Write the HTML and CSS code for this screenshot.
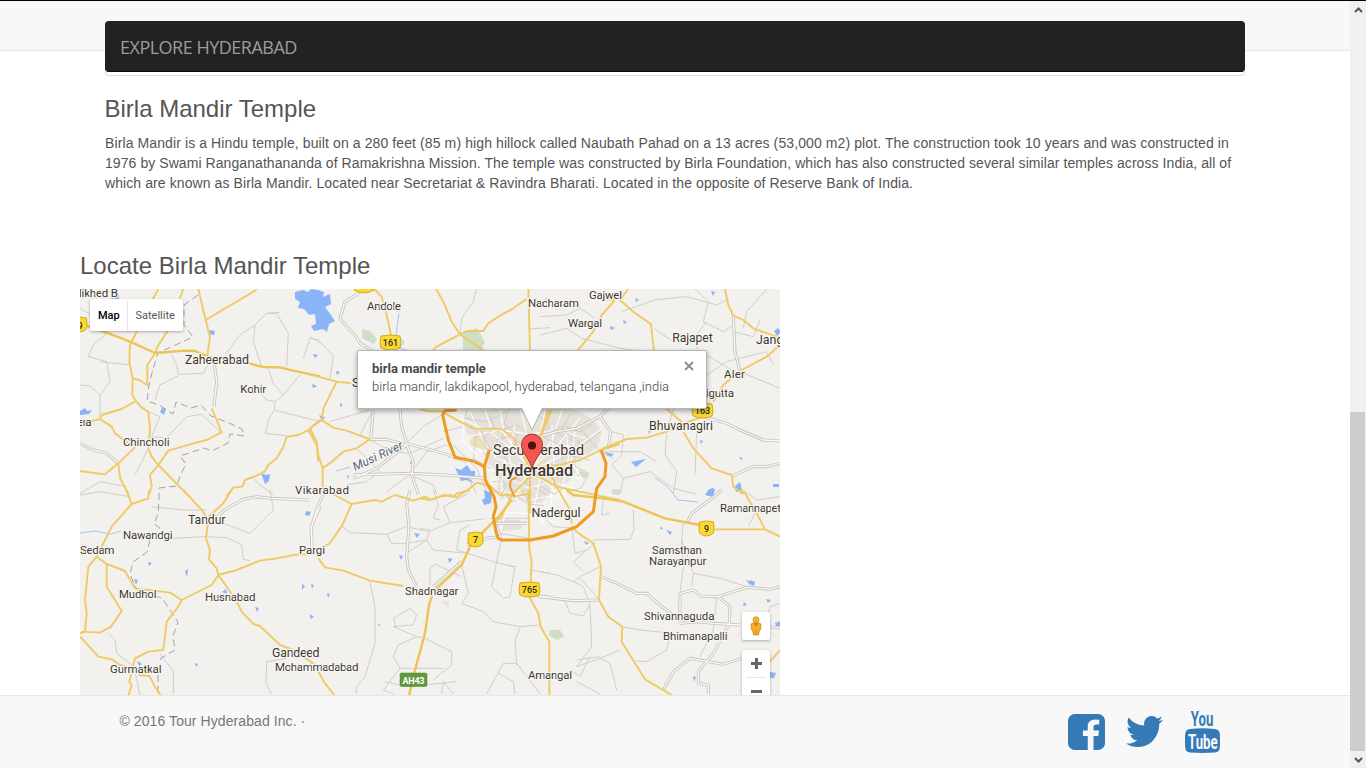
FILE: index.html
```
<!DOCTYPE html>
<html lang="en">
<head>
<meta charset="utf-8">
<title>Explore Hyderabad</title>
<link rel="stylesheet" href="styles.css">
</head>
<body>
<div class="window">
  <div class="page">
    <header class="topbar">
      <div class="panel"><nav class="navbar"><a class="brand">EXPLORE HYDERABAD</a></nav></div>
    </header>
    <main class="content">
      <section class="about">
        <h3>Birla Mandir Temple</h3>
        <p><span class="loose">Birla Mandir is a Hindu temple, built on a 280 feet (85 m) high hillock called Naubath Pahad on a 13 acres (53,000 m2) plot. The construction took 10 years and was constructed in</span> <span class="snug">1976 by Swami Ranganathananda of Ramakrishna Mission. The temple was constructed by Birla Foundation, which has also constructed several similar temples across India, all of</span> <span class="medium">which are known as Birla Mandir. Located near Secretariat &amp; Ravindra Bharati. Located in the opposite of Reserve Bank of India.</span></p>
      </section>
      <section class="locate">
        <h3>Locate Birla Mandir Temple</h3>
        <div class="map">
          <svg class="canvas" viewBox="80 289 700 406" width="700" height="406">
            <!-- parks and urban areas -->
            <path class="park" d="M463 333l14-5 8 14-4 8h-18zM362 329l8 2 7 8-3 5-12-6zM469 427l5-5 8 4 1 9-10-2zM580 470l8 4-3 5-8-3zM550 630h10l4 6-6 4-9-4zM612 489l9 1-2 5-7-1z"/>
            <path class="urban" d="M463 420l8-8 30-4 20-3 24 1 31 4 18 10 8 12-4 14-10 8-12 4 0 14-8 10-14 8-12 12-15 2-12-6-14 1-4-10 2-14-12-14-10-20-10-8zM500 519l20 1 2 9-20 2zM440 601l9 1v6z"/>
            <path class="sand" d="M470 440l8-6 9 7-4 8-12-3zM524 456l10-4 12 8-2 12-10 4-10-6z"/>
            <!-- lakes -->
            <path class="water" d="M295 292l8-2 5 2 3-3 7 1 6 2-1 5 7-3 1 10-6 3 6 8 4 6-6 3-2 8-4-3-9 2-3-5 5-2-1-10-6 1-5-6-6-1 2-6-5-3zM455 468l6 2 6-5 4 6 4 0 0 6-5 2 4 4-8-3-5 1-3-7zM484 490l8 3-1 10-7 2-2-5 3-2zM111 289h6l3 14-8-3zM210 330l5 1-1 4-6-1zM80 411l5-3 2 3 5-1-3 4-9 1zM261 473l5 2 4-1-1 7-4 3zM162 408l4 1-2 6-4-3zM712 488l3 1-2 8-8-2 3-5zM735 486l5-4 2 8-6 2zM774 331l4-3 3 4-4 4zM775 623l6-2v5h-5zM604 452l10 2-4 3zM631 462l15-3-10 8zM750 580l5 2-1 4-4-2zM773 484h6v3h-6zM770 672l6 1-2 5h-6zM346 475l3 1v3zM185 571l3-2-1 8zM306 511l5 1-2 4-4-1zM134 579l4 1-2 5zM222 592l4-3 1 5zM148 562l4 1-3 3zM255 607l4 1-2 4zM302 584l3 2-3 4zM311 584l3 1-2 4zM310 614l4 3-4 2zM414 533l6 1-3 4zM399 555l4 1-2 4zM448 558l5 1-4 4zM327 593l3 1-2 4zM666 530l6 2-2 3zM660 527l3 1-2 2zM584 541l5 2-3 2zM610 326l5 2-4 2zM623 320l4 2-3 2zM635 298l4 2-3 2zM711 291l4 1-2 4zM312 384l5 2-4 2zM336 371l4 1-3 3zM319 415l6 2-3 4zM340 403l3 2-3 2zM313 354l5 1-3 3zM700 440l3 1-2 3zM739 457l4 1-2 2zM744 602l3 3-4 1zM766 599l5 1-3 3zM746 580l6 2-2 3zM693 676l3 1-2 5zM648 430l3 1-2 3zM195 663l3 1-2 3zM137 661l5 3-3 2zM378 624l3 1-3 1zM410 461l2 2-2 1z"/>
            <path class="stream" d="M399 313l-3 22 8 7-5 6 13 4M336 471l14-4M80 533l15-2 16 3 10-3M655 478l12 8 11 14 20 2"/>

            <!-- minor roads -->
            <g class="minor">
              <g transform="translate(80 285) scale(.33333)"><path d="M435 210L480 150 525 120 560 85 590 85 625 145 620 245M565 250L580 295 610 330 585 350 583 375 720 410M530 315L560 345 585 350M583 375L565 405 557 445 620 452M80 145L40 180 25 215 80 230 90 290 60 330 60 395M60 230L150 240M0 300L30 303 60 330M275 210L290 240 295 268 370 265 385 235M295 272L240 300 225 345M205 380L240 395 215 455 260 458 320 395 365 388 420 440M0 70L50 100 70 130M610 330L660 270M670 220L690 160 720 165M520 580L540 600 580 628M560 85L600 82M205 490L180 540 165 570M0 625L60 590 140 605M525 120L520 170 545 245"/></g>
              <g transform="translate(310 285) scale(.33333)"><path d="M0 155L40 180 70 215 60 280M500 12L490 50 455 100 450 148M655 132L720 128M190 375L160 430 150 455M395 390L340 425 290 475M60 410L180 375M180 463L240 500 300 505 400 460M140 490L210 560 170 590 110 600M300 570L370 600 380 628M305 565L230 620M410 480L350 500 305 560M430 480L500 550 530 620M400 440L460 425 470 375M500 430L490 520 540 550M580 430L575 500 610 560M460 400L530 410 600 375M560 440L620 420 680 460M470 570L500 628M550 590L620 580 710 628"/></g>
              <g transform="translate(540 285) scale(.33333)"><path d="M0 95L80 90 120 70 165 100M0 150L80 130 125 160 240 190 300 198M245 80L345 45 440 35 530 60 560 45M342 130L400 170M465 12L505 50 490 110 550 140 580 120M500 110L460 160 475 195M580 140L640 155 660 105M610 130L620 80 680 12M500 270L560 230 680 200 700 240M600 260L720 310M500 210L600 270M120 430L180 500 220 520M215 440L250 450 245 510 215 540 250 580 240 628M40 440L130 480 180 440M330 440L390 410 400 372M380 445L375 510 410 560 400 628M470 440L465 570M180 500L300 500 350 530M250 580L330 560 400 610 470 628"/></g>
              <g transform="translate(80 490) scale(.33333)"><path d="M0 15L60 5 150 20M215 50L310 60 380 60M280 145L370 140 440 143 485 165 490 208 510 212M430 100L510 130 580 60 570 0M85 430L105 450 110 490 155 525M165 545L180 615M240 490L280 545 280 612M620 505L560 515 558 580 575 612"/></g>
              <g transform="translate(310 490) scale(.33333)"><path d="M97 110L120 128 230 133 290 110 355 125 420 98 540 85 660 85M230 133L245 160 290 160 350 150 370 180 470 190M290 190L350 150 360 120 330 115M370 0L385 45 370 85 390 90M475 10L400 50 420 98M550 75L575 140 545 290 580 325 600 320 615 230 590 225M440 180L550 215 610 230M440 180L450 120 480 105M455 225L475 310 455 340 520 365 550 395 630 410M360 310L360 235 375 222 455 260M180 275L195 350 195 460 165 560 140 590 138 612M250 385L300 355 320 375 310 405 250 410 320 440 345 445 425 485 425 525 370 570M320 440L265 465 250 500 270 535 220 600 250 612M270 535L400 535M250 385L258 412M225 575L290 590 440 575M395 612L400 575 430 612M630 410L690 405M630 415L615 450 620 525M530 612L580 520 620 520 690 612M565 550L610 575 615 612M570 130L660 145M660 240L720 250"/></g>
              <g transform="translate(540 490) scale(.33333)"><path d="M0 245L50 255 100 275 120 260 180 230M120 265L175 325M95 110L105 190 140 180 165 160M280 60L282 120 270 148 160 150M140 180L100 215 130 245M75 335L90 370 130 378 150 345 130 290 100 275M150 345L155 470 110 530M245 410L300 420 400 430M390 435L380 480 320 515 290 512M180 505L210 520 230 600M110 530L180 505 240 480M430 95L425 150 460 250 540 265 620 290M425 150L430 230 420 310M625 110L650 60M460 250L455 290M530 320L520 420 480 500M110 575L180 612M90 540L120 560 150 500M180 500L110 510M610 0L650 30 720 20M0 70L40 110 105 115M190 25L185 75 210 70M685 370L690 350 720 340"/></g>
            </g>
            <!-- city street mesh -->
            <path class="mesh" d="M462 418l18 10 20 2 15 10 14 20M470 412l14 30 12 16 20 8 14 4M485 410l8 24 20 16 18 18M500 408l4 26 26 34M520 409l6 22 6 38M545 409l-5 30-8 30M562 410l-10 30-20 28M580 418l-20 24-28 26M600 430l-30 22-38 18M478 450l20 4 20-6 22 4 20-8 24 6M470 436l30-6 30 4 26-4 30 8M488 470l30 4 14-4 24 6 26 2M490 480l22 0 16 8 24-6 30 8M500 490l16 4 14 6 20-4 16 4M516 500l6-18 10-12 20 18 14 14M540 478l-6 32 10 14M505 460l-4 26 6 16M565 425l4 30-6 30 4 26M515 425l-6 30 4 20M552 425l2 40-4 50M484 520l20-8 26 2 30 10M505 515l-4 16M478 456l-16-16 2-20M583 480l-12-18 4-30"/>
            <path class="streets" d="M466 424l16 8 4 16 14 6M490 414l4 14-10 10 8 14M508 412l-4 12 14 12-6 16M535 412l14 12-4 14 14 6 4 16M570 414l-8 16 18 12-8 14 18 4M592 424l-12 8-16-6-14 6M496 440l14-4 12 8M498 474l8 12-4 8 14 8M540 486l14 8 10-6M522 490l8 14 14 2M575 466l14 8-8 14-14 4"/>

            <!-- secondary roads: grey casing with a white core -->
            <defs><g id="secondary">
              <g transform="translate(80 285) scale(.33333)"><path d="M403 240L410 290 402 365M0 475L40 495 80 505 115 535"/></g>
              <g transform="translate(310 285) scale(.33333)"><path d="M150 12L145 25 105 50 90 100 110 125 135 150 150 175 190 198M270 375L275 425 290 475 400 505 470 530M190 375L182 463 230 463 290 480 200 550 130 580M290 480L310 530 305 570 325 628M130 570L300 565 400 570 530 580"/></g>
              <g transform="translate(540 285) scale(.33333)"><path d="M580 95L585 200 600 260M490 395L560 415 600 435 670 465 720 468M0 455L50 440 110 430 180 395 205 370M180 395L212 440 205 490M575 575L640 545 680 545 720 535"/></g>
              <g transform="translate(80 490) scale(.33333)"><path d="M400 90L440 55 490 28 530 20 570 25 690 30M720 50L693 110 697 180"/></g>
              <g transform="translate(310 490) scale(.33333)"><path d="M45 0L20 60 5 110 5 170M300 0L290 40 297 110 290 200 295 240 320 290M370 290L455 215M470 165L530 145 570 140M560 100L650 100M665 315L720 322"/></g>
              <g transform="translate(540 490) scale(.33333)"><path d="M440 100L455 70 510 30 545 0M185 260L240 285 290 310 320 310 365 350 400 375M420 400L420 310 460 300 480 318 535 320 620 292 690 298 720 290M535 320L570 350 568 400 520 490 475 545 475 580 505 585 505 612M370 600L400 545 450 505 550 523 605 505M0 320L100 332 175 330M420 400L470 395 520 400 600 405M690 410L720 415"/></g>
            </g></defs>
            <use href="#secondary" class="casing"/>
            <use href="#secondary" class="core"/>

            <!-- state boundary -->
            <path class="border" d="M198 295l-14 10 0 20 9 12-35 16-6 20-3 12-2 16 12 4 14 9 3-12 15 6 10-3 10 11 18 7 13 6 2 7-14-2-2 9-16 8-8-3-24 8 6 8-6 12-3 10-18 2 0 12-1 14-4 10 6 4-10 12-3 12-14 10-3 12 6 14 12 6 14 4 16 24-5 14 2 14-14 8-3 14v24"/>

            <!-- highways -->
            <g class="highway">
              <g transform="translate(80 285) scale(.33333)"><path class="trunk" d="M20 122L70 140 120 158 155 172 225 204 315 197 345 198 385 215 510 236 550 246 600 247 640 257 720 274"/><path d="M235 12L200 75 165 150 150 180 148 230 158 280 157 330 168 348 185 368 205 380 210 430 205 490 215 515 235 540 325 632M355 12L377 105 390 155 382 212M377 105L530 14M310 12L265 135 235 180 225 205 202 240 202 300 178 285 160 280M168 348L125 372 65 390 60 402 20 412M60 402L95 425 105 445 135 468 165 487 115 535 75 568 0 558M115 535L120 578 145 630M265 497L235 540 210 570 215 605 207 628M265 497L340 475 380 465 425 442 410 405 395 370M720 405L685 435 655 450 620 456 608 490 590 520 565 540 553 560 530 572 495 585 487 605 460 608 440 632M685 435L710 480 715 530"/></g>
              <g transform="translate(310 285) scale(.33333)"><path d="M0 268L80 290 125 295 350 378 400 380M80 290L40 370 35 405 0 430 20 470 25 510 38 550 38 628M35 405L70 428 110 437 180 463 140 490 100 500 60 535 38 550M193 12L215 35 230 90 243 150M378 12L400 50 425 110 450 148 480 170 525 198M450 148L380 185 365 200M450 148L470 138 520 138 535 115 565 95 610 70 650 42M655 12L660 198"/></g>
              <g transform="translate(540 285) scale(.33333)"><path d="M225 45L185 90 160 140 110 200M265 12L240 45 280 80 333 118 342 200M225 45L150 38M555 12L565 60 580 92 610 105 640 130 710 155 720 180 680 215 605 255 550 300 520 350M490 395L430 415 380 440 320 458 260 462 185 492M430 415L380 372M430 440L460 490 515 550 575 570 580 605 610 628M35 372L20 410 5 450M0 70L20 40"/></g>
              <g transform="translate(80 490) scale(.33333)"><path d="M140 0L155 42 95 110 50 200 25 230 15 330 20 370 15 425 0 430M155 42L205 25 207 0M310 0L365 60 385 90 378 145 390 180 387 208 410 235 415 255 440 290 470 335 485 365 520 402 540 408 600 465 640 480 700 520 720 548M455 0L430 40 385 80M415 255L395 285 305 330 270 308 165 295 135 243 80 222 50 200M80 222L80 290 105 330 125 363 93 410 60 428 5 425M0 440L55 500 95 508 120 525 160 535M305 330L295 350 260 395 250 480 205 485 165 505 155 545 148 575 155 585 145 618M175 555L208 558 225 590 243 618M415 255L470 240 540 212 590 205 640 195 720 190"/></g>
              <g transform="translate(310 490) scale(.33333)"><path class="trunk" d="M605 30L570 75 515 130 480 170 455 225 370 305 357 345 345 430 315 540 297 618"/><path d="M45 0L125 42 195 30 215 35 255 15 310 32 345 20 365 30 400 15 430 20 440 10 480 0M125 42L97 105 60 160 30 175M25 205L45 232 100 242 180 272 280 288M655 0L658 180 665 210 660 325 685 370 692 410 718 455 718 618M0 520L25 545 45 580 75 618"/></g>
              <g transform="translate(540 490) scale(.33333)"><path class="trunk" d="M80 0L100 15 190 25 250 35 375 85 480 105"/><path d="M525 118L675 118 720 140M675 118L650 70 615 10 600 0M95 110L115 130 160 160 183 230 177 330 205 380 247 410 245 455 315 568 400 618M720 480L690 515"/></g>
              <g transform="translate(420 380) scale(.33333)"><path d="M75 100L120 125 160 145 245 147 280 175 300 210 330 265M330 270L330 400M385 90L370 140 345 220 335 265M340 262L420 255 480 240 543 210 600 192M330 275L410 320 480 335 560 352 600 360M410 320L450 390 455 430M0 355L30 360 60 350 90 345 110 352 150 325 170 308 210 318 240 345 275 345M220 430L245 410 275 345 320 300 335 275M335 340L280 350M335 275L390 280 410 320"/></g>
            </g>
            <g transform="translate(420 380) scale(.33333)"><path class="expressway" d="M110 90L75 92 68 105 85 180 105 232 160 243 193 260 196 300 222 350 228 380 220 410 228 455 235 475 245 480 330 480 400 468 470 440 520 395 530 325 555 290 558 250 543 210M208 210L193 260"/><path class="spur" d="M283 350L270 320 272 300 290 292"/></g>

            <!-- route shields -->
            <g class="shield">
              <path d="M381 336q10-2 19 0 2 8 0 12-9 4-19 0-2-4 0-12z"/><path d="M354 278h20v12q-10 6-20 0z"/><path d="M693 404q10-2 19 0 2 8 0 12-9 4-19 0-2-4 0-12z"/><path d="M520 583q10-2 19 0 2 8 0 12-9 4-19 0-2-4 0-12z"/><path d="M468.500 533q7-2 14 0 1 8 0 11-7 6-14 0-1-3 0-11z"/><path d="M699.500 522q7-2 14 0 1 8 0 11-7 6-14 0-1-3 0-11z"/><path d="M72.500 318q7-2 14 0 1 8 0 11-7 6-14 0-1-3 0-11z"/>
            </g>
            <g class="route"><text x="390.500" y="346">161</text><text x="702.500" y="413.500">163</text><text x="529.500" y="593.300">765</text><text x="475.500" y="543.200">7</text><text x="706.500" y="532.200">9</text><text x="80" y="329">9</text></g>
            <rect class="ah" x="400" y="673" width="27" height="13.500" rx="1.500"/><text class="ah-text" x="413.500" y="683.500" textLength="22">AH43</text>

            <!-- place names -->
            <g class="place">
              <text x="79" y="297.300" textLength="39">likhed B</text>
              <text class="town" x="185" y="364.300" textLength="64">Zaheerabad</text>
              <text x="240.300" y="392.700" textLength="26">Kohir</text>
              <text x="123" y="446" textLength="46.500">Chincholi</text>
              <text x="78" y="426" textLength="13.500">era</text>
              <text x="295" y="494" textLength="54">Vikarabad</text>
              <text x="367" y="310" textLength="34">Andole</text>
              <text class="town" x="352" y="386.500">S</text>
              <text x="528" y="307" textLength="51">Nacharam</text>
              <text x="589" y="298.700" textLength="33">Gajwel</text>
              <text x="568" y="327" textLength="34">Wargal</text>
              <text class="town" x="672.300" y="341.500" textLength="40.500">Rajapet</text>
              <text class="town" x="756" y="344.300">Jang</text>
              <text x="724" y="378" textLength="21">Aler</text>
              <text x="706" y="396.700" textLength="28">igutta</text>
              <text class="town" x="649" y="430" textLength="64">Bhuvanagiri</text>
              <text class="town" x="188" y="524.300" textLength="37.500">Tandur</text>
              <text x="123" y="538.700" textLength="49.500">Nawandgi</text>
              <text x="80" y="553.700" textLength="34.500">Sedam</text>
              <text x="119" y="597.700" textLength="37.500">Mudhol</text>
              <text x="205" y="600.700" textLength="50.500">Husnabad</text>
              <text x="299" y="554" textLength="26">Pargi</text>
              <text class="town" x="272" y="657" textLength="47.500">Gandeed</text>
              <text x="275" y="670.700" textLength="83.500">Mohammadabad</text>
              <text x="110" y="672.700" textLength="51.500">Gurmatkal</text>
              <text x="405" y="594.700" textLength="53.500">Shadnagar</text>
              <text class="town" x="531.500" y="517.300" textLength="49">Nadergul</text>
              <text x="720" y="511.500" textLength="61">Ramannapet</text>
              <text x="652" y="553.700" textLength="50">Samsthan</text>
              <text x="649" y="564.700" textLength="57.500">Narayanpur</text>
              <text x="644" y="619.700" textLength="70.500">Shivannaguda</text>
              <text x="663" y="639.700" textLength="64.500">Bhimanapalli</text>
              <text x="528" y="678.700" textLength="44">Amangal</text>
              <text class="city" x="493" y="454.800" textLength="91">Secunderabad</text>
              <text class="capital" x="495" y="476" textLength="78">Hyderabad</text>
              <text class="river" transform="translate(355 471) rotate(-25)" textLength="54">Musi River</text>
            </g>

            <!-- marker -->
            <path class="pin" d="M532 469.500C530 458 521.500 454 521.500 444.500a10.500 10.500 0 0 1 21 0C542.500 454 534 458 532 469.500z"/>
            <circle class="pin-dot" cx="532" cy="445.500" r="4"/>
          </svg>

          <div class="types"><b>Map</b><span>Satellite</span></div>
          <div class="info">
            <strong>birla mandir temple</strong>
            <span>birla mandir, lakdikapool, hyderabad, telangana ,india</span>
            <svg class="close" viewBox="0 0 10 10" width="10" height="10"><path d="M1 1l8 8M9 1L1 9"/></svg>
            <svg class="tail" viewBox="0 0 20 23" width="20" height="23"><path d="M0 0h20L10 22z" fill="#fff"/><path d="M0 1l10 21L20 1" fill="none" stroke="#aaa" stroke-width=".8"/></svg>
          </div>
          <div class="pegman"><svg viewBox="0 0 12 20" width="12" height="20"><path d="M3 7h6l2 1-.3 5.500-1.200.5L8.500 19h-5l-1-5-1.200-.5L1 8z" fill="#f4ae2c" stroke="#c78317" stroke-width=".7"/><path d="M4 7l2 3 2-3zM6 14v5" fill="#e4742b" stroke="#c78317" stroke-width=".6"/><circle cx="6" cy="3.800" r="3" fill="#f6b32e" stroke="#c78317" stroke-width=".7"/></svg></div>
          <div class="zoom"><i class="plus"></i><hr><i class="minus"></i></div>
        </div>
      </section>
    </main>
    <footer class="footer">
      <p>© 2016 Tour Hyderabad Inc. ·</p>
      <div class="social">
        <svg class="facebook" viewBox="0 128 1536 1536" preserveAspectRatio="none"><path d="M1248 128q119 0 203.500 84.500t84.500 203.500v960q0 119-84.500 203.500t-203.500 84.500h-188v-595h199l30-232h-229v-148q0-56 23.500-84t91.500-28l122-1v-207q-63-9-178-9-136 0-217.500 80t-81.500 226v171h-200v232h200v595h-532q-119 0-203.500-84.500t-84.500-203.500v-960q0-119 84.500-203.500t203.500-84.500h960z"/></svg>
        <svg class="twitter" viewBox="108 256 1576 1280" preserveAspectRatio="none"><path d="M1684 408q-67 98-162 167 1 14 1 42 0 130-38 259.500t-115.500 248.500-184.500 210.500-258 146-323 54.500q-271 0-496-145 35 4 78 4 225 0 401-138-105-2-188-64.500t-114-159.500q33 5 61 5 43 0 85-11-112-23-185.500-111.500t-73.500-205.500v-4q68 38 146 41-66-44-105-115t-39-154q0-88 44-163 121 149 294.500 238.500t371.500 99.500q-8-38-8-74 0-134 94.500-228.500t228.500-94.500q140 0 236 102 109-21 205-78-37 115-142 178 93-10 186-50z"/></svg>
        <svg class="youtube" viewBox="0 0 35 42"><text transform="translate(5.800 15.200) scale(.55 1)" textLength="41" lengthAdjust="spacingAndGlyphs">You</text><path d="M5 17.900Q17.500 16.800 30 17.900 34.500 18.300 34.800 23 35.300 30 34.800 36.500 34.500 41 30 41.500 17.500 42.400 5 41.500.5 41 .2 36.500-.3 30 .2 23 .5 18.300 5 17.900z"/><text class="tube" transform="translate(3 37.700) scale(.55 1)" textLength="54" lengthAdjust="spacingAndGlyphs">Tube</text></svg>
      </div>
    </footer>
  </div>
  <div class="scrollbar">
    <svg viewBox="0 0 9 6"><path d="M1 5l3.500-3.500L8 5"/></svg>
    <div class="thumb"></div>
    <svg viewBox="0 0 9 6"><path d="M1 1l3.500 3.500L8 1"/></svg>
  </div>
</div>
</body>
</html>
```
FILE: styles.css
```
* { box-sizing: border-box; }
body { margin: 0; background: #fff; color: #555; font: 14px/20px "Liberation Sans", Arial, sans-serif; overflow: hidden; }
.window { display: flex; width: 1366px; height: 768px; border-top: 1px solid #000; }
.page { width: 1350px; display: flex; flex-direction: column; }
.topbar { height: 50px; padding: 20px 105px 0; background: #f8f8f8; border-bottom: 1px solid #e7e7e7; }
.panel { height: 55px; background: #fff; border: 1px solid #ddd; border-top: 0; border-radius: 4px; }
.navbar { display: flex; align-items: center; height: 51px; margin: 0 -1px; padding: 1px 14px 0; background: #222; border: 1px solid #222; border-bottom-color: #080808; border-radius: 4px; }
.brand { color: #9d9d9d; font: 18px/20px "Open Sans", "Noto Sans", sans-serif; white-space: nowrap; letter-spacing: -.5px; }
.content { flex: none; height: 644px; overflow: hidden; padding: 0 80px; }
h3 { margin: 0; font-size: 24px; line-height: 26px; font-weight: 400; }
.about { padding: 45px 0 0 25px; height: 202px; }
.about h3 { margin-left: -.5px; }
.about p { margin: 11px 0 0; white-space: nowrap; }
.about span { display: block; }
.loose { letter-spacing: .103px; }
.snug { letter-spacing: .07px; }
.medium { letter-spacing: .088px; }
.map { position: relative; width: 700px; height: 406px; margin-top: 10px; overflow: hidden; background: #f2f1ed; font-family: Roboto, sans-serif; }
.canvas { display: block; }
.canvas path { vector-effect: non-scaling-stroke; }
.park { fill: #cfdfc5; }
.urban { fill: #e6e1da; }
.sand { fill: #eadfbb; }
.water { fill: #8ab4f8; }
.stream { fill: none; stroke: #a3c4f7; stroke-width: 1; }
.minor { fill: none; stroke: #cdc9c4; stroke-width: .9; stroke-linejoin: round; }
.mesh { fill: none; stroke: #fff; stroke-width: 1.2; opacity: .9; }
.streets { fill: none; stroke: #cbc5bb; stroke-width: .8; }
.casing { fill: none; stroke: #c6c2bc; stroke-width: 3; stroke-linejoin: round; }
.core { fill: none; stroke: #fbfaf8; stroke-width: 1.3; stroke-linejoin: round; }
.border { fill: none; stroke: #a5a39f; stroke-width: 1; stroke-dasharray: 7 4; }
.highway { fill: none; stroke: #efca64; stroke-width: 1.9; stroke-linejoin: round; }
.trunk { stroke: #edc354; stroke-width: 2.400; }
.expressway { fill: none; stroke: #ee9a25; stroke-width: 3; stroke-linejoin: round; }
.spur { fill: none; stroke: #ee9a25; stroke-width: 2; }
.shield { fill: #fad932; stroke: #d6a91d; stroke-width: 1; }
.route { font-size: 9px; fill: #332f18; text-anchor: middle; font-weight: 500; }
.ah { fill: #5d9b3d; stroke: #4d8631; stroke-width: .5; }
.ah-text { font-size: 9px; font-weight: 700; fill: #fff; text-anchor: middle; }
.place { font-size: 11.600px; fill: #3c372f; stroke: #f7f5f2; stroke-width: 2.500px; stroke-linejoin: round; paint-order: stroke; }
.town { font-size: 12.400px; }
.city { font-size: 14.300px; }
.capital { font-size: 16.200px; font-weight: 500; }
.river { font-size: 12px; font-style: italic; fill: #53617f; }
.pin { fill: #f3574d; stroke: #a63229; stroke-width: 1; }
.pin-dot { fill: #4e1310; }
.types { position: absolute; left: 10px; top: 10px; width: 93px; height: 32px; display: flex; align-items: center; padding-top: 1px; background: #fff; border-radius: 2px; box-shadow: 0 1px 3px rgba(0,0,0,.3); font-size: 11px; }
.types b { width: 38px; padding-left: 8px; color: #000; font-weight: 500; border-right: 1px solid #e7e7e7; line-height: 31px; }
.types span { padding-left: 7.500px; color: #565656; }
.info { position: absolute; left: 277px; top: 61px; width: 350px; height: 59px; padding: 9px 14px; display: flex; flex-direction: column; background: #fff; border: 1px solid #b5b5b5; border-radius: 2px; box-shadow: 0 2px 5px rgba(0,0,0,.35); font-size: 13px; line-height: 18px; white-space: nowrap; color: #555; }
.info strong { font-weight: 700; color: #4b4b4b; }
.info span { font-weight: 300; color: #444; }
.close { position: absolute; right: 12px; top: 10px; fill: none; stroke: #8c8c8c; stroke-width: 1.800; }
.tail { position: absolute; left: 164px; top: 57px; }
.pegman, .zoom { position: absolute; left: 662px; width: 28px; background: #fff; border-radius: 2px; box-shadow: 0 1px 3px rgba(0,0,0,.3); }
.pegman { top: 323px; height: 28px; display: grid; place-items: center; }
.zoom { top: 361px; height: 56px; display: flex; flex-direction: column; align-items: center; padding-top: 8px; }
.plus { width: 11px; height: 11px; background: linear-gradient(#666,#666) 50% 50% / 11px 3px no-repeat, linear-gradient(#666,#666) 50% 50% / 3px 11px no-repeat; }
.minus { width: 11px; height: 3px; background: #666; }
.zoom hr { width: 20px; height: 1px; margin: 8px 0 12px; border: 0; background: #e6e6e6; }
.footer { height: 73px; display: flex; justify-content: space-between; padding: 15px 130px 0 120px; background: #f8f8f8; border-top: 1px solid #e7e7e7; color: #777; }
.footer p { margin: 0 0 0 -.5px; letter-spacing: .08px; }
.social { display: flex; align-items: flex-start; fill: #337ab7; }
.facebook { width: 37px; height: 36px; margin: 3px 21px 0 0; }
.twitter { width: 37px; height: 31px; margin: 5px 22px 0 0; }
.youtube { width: 35px; height: 42px; font: 700 21px Roboto, sans-serif; }
.tube { fill: #f8f8f8; }
.scrollbar { width: 16px; background: #f0f0f0; display: flex; flex-direction: column; align-items: center; justify-content: space-between; padding: 6px 0 5px; }
.scrollbar svg { width: 9px; height: 6px; fill: none; stroke: #555; stroke-width: 2; }
.thumb { width: 15px; height: 339px; margin: auto 1px 6px 0; background: #cdcdcd; }
```
